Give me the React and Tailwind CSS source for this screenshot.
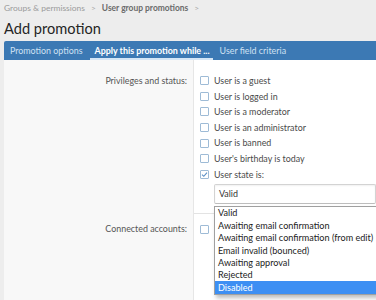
const options = [
  "User is a guest",
  "User is logged in",
  "User is a moderator",
  "User is an administrator",
  "User is banned",
  "User's birthday is today",
];

const states = [
  "Valid",
  "Awaiting email confirmation",
  "Awaiting email confirmation (from edit)",
  "Email invalid (bounced)",
  "Awaiting approval",
  "Rejected",
  "Disabled",
];

function Box({ checked }) {
  return (
    <span className="w-[9px] h-[9px] border border-[#9ebbd6] rounded-[1px] bg-white flex items-center justify-center shrink-0">
      {checked && (
        <svg width="7" height="7" viewBox="0 0 7 7">
          <path d="M1 3.6 L2.8 5.3 L6 1.6" fill="none" stroke="#5a8fc6" strokeWidth="1.1" />
        </svg>
      )}
    </span>
  );
}

function Opt({ label, checked }) {
  return (
    <div className="h-[15.6px] flex items-center gap-[5px]">
      <Box checked={checked} />
      <span>{label}</span>
    </div>
  );
}

export default function App() {
  return (
    <div className="w-[376px] h-[300px] overflow-hidden bg-[#ededed] relative font-['Lato',sans-serif] text-[#4a4a4a]">
      <div className="h-[16px] pl-[4px] flex items-center text-[8.45px] text-[#9b9b9b] whitespace-nowrap">
        <span>Groups &amp; permissions</span>
        <span className="mx-[6px] text-[#aaa]">&gt;</span>
        <span className="font-bold text-[#6b6b6b]">User group promotions</span>
        <span className="mx-[6px] text-[#aaa]">&gt;</span>
      </div>
      <div className="h-[25px] pl-[4px] flex items-center text-[14.6px] text-[#252525] whitespace-nowrap">
        Add promotion
      </div>
      <div className="ml-[4px] h-[19px] bg-[#3c79b4] rounded-tl-[2px] flex items-stretch text-[8.9px] whitespace-nowrap">
        <div className="pl-[6px] pr-[7px] flex items-center text-[#cfe1f3]">Promotion options</div>
        <div className="pl-[5px] pr-[3px] flex items-center text-white font-bold border-b-2 border-[#d5e6f6] pt-[2px]">
          Apply this promotion while ...
        </div>
        <div className="pl-[7px] pr-[6px] flex items-center text-[#cfe1f3]">User field criteria</div>
      </div>
      <div className="ml-[4px] bg-white text-[8.9px] whitespace-nowrap">
        <div className="flex">
          <div className="w-[190px] shrink-0 bg-[#f8f8f8] border-r border-[#e6e6e6] pt-[13px] pr-[6px] text-right text-[#555]">
            <div className="h-[15.6px] flex items-center justify-end">Privileges and status:</div>
          </div>
          <div className="flex-1 pl-[6px] pt-[13px] pb-[9px]">
            {options.map((o) => (
              <Opt key={o} label={o} />
            ))}
            <Opt label="User state is:" checked />
            <div className="ml-[14px] mt-[2px] h-[20px] border border-[#d3d3d3] border-b-[#bdbdbd] rounded-[2px] bg-white flex items-center pl-[4px] text-[#333] shadow-[inset_0_1px_2px_rgba(0,0,0,0.06)]">
              Valid
            </div>
          </div>
        </div>
        <div className="flex">
          <div className="w-[190px] shrink-0 bg-[#f8f8f8] border-r border-[#e6e6e6] pt-[8px] pr-[6px] text-right text-[#555]">
            <div className="h-[15.6px] flex items-center justify-end">Connected accounts:</div>
          </div>
          <div className="flex-1 pl-[6px] pt-[8px] border-t border-[#e3e3e3] h-[90px]">
            <Opt label="" />
          </div>
        </div>
      </div>
      <div className="absolute left-[214px] top-[206px] w-[170px] bg-white border border-[#a0a0a0] shadow-[2px_3px_4px_rgba(0,0,0,0.25)] text-[9.1px] text-[#222] whitespace-nowrap">
        {states.map((s, i) => (
          <div
            key={s}
            className={
              i === states.length - 1
                ? "h-[12.4px] flex items-center pl-[3px] bg-[#3d8ff3] text-white"
                : "h-[12.4px] flex items-center pl-[3px]"
            }
          >
            {s}
          </div>
        ))}
      </div>
    </div>
  );
}
